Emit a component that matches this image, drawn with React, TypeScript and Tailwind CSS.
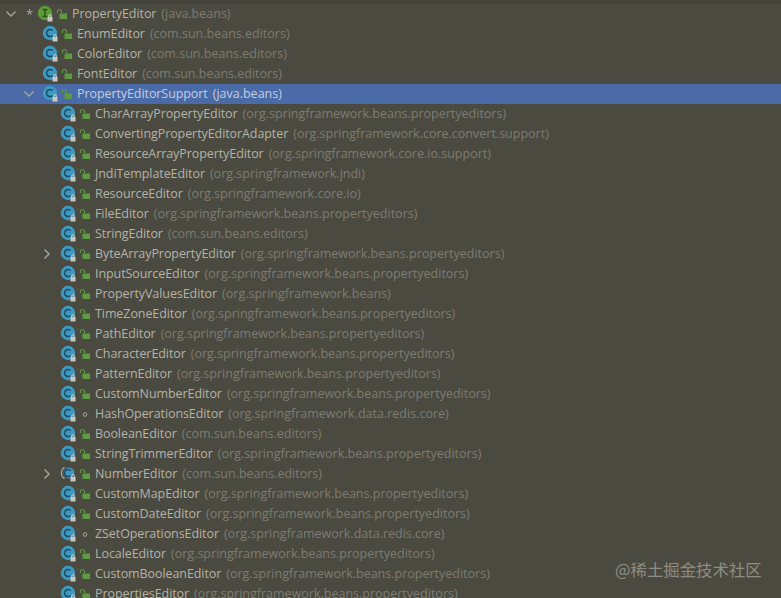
import React from "react";

type RowData = { name: string; pkg: string; depth: 0 | 1 | 2; chevron?: "down" | "right"; selected?: boolean; vis?: "open" | "dot"; kind?: "i" | "c" | "number" };

const rows: RowData[] = [
  { name: "PropertyEditor", pkg: "(java.beans)", depth: 0, chevron: "down", kind: "i" },
  { name: "EnumEditor", pkg: "(com.sun.beans.editors)", depth: 1 },
  { name: "ColorEditor", pkg: "(com.sun.beans.editors)", depth: 1 },
  { name: "FontEditor", pkg: "(com.sun.beans.editors)", depth: 1 },
  { name: "PropertyEditorSupport", pkg: "(java.beans)", depth: 1, chevron: "down", selected: true },
  { name: "CharArrayPropertyEditor", pkg: "(org.springframework.beans.propertyeditors)", depth: 2 },
  { name: "ConvertingPropertyEditorAdapter", pkg: "(org.springframework.core.convert.support)", depth: 2 },
  { name: "ResourceArrayPropertyEditor", pkg: "(org.springframework.core.io.support)", depth: 2 },
  { name: "JndiTemplateEditor", pkg: "(org.springframework.jndi)", depth: 2 },
  { name: "ResourceEditor", pkg: "(org.springframework.core.io)", depth: 2 },
  { name: "FileEditor", pkg: "(org.springframework.beans.propertyeditors)", depth: 2 },
  { name: "StringEditor", pkg: "(com.sun.beans.editors)", depth: 2 },
  { name: "ByteArrayPropertyEditor", pkg: "(org.springframework.beans.propertyeditors)", depth: 2, chevron: "right" },
  { name: "InputSourceEditor", pkg: "(org.springframework.beans.propertyeditors)", depth: 2 },
  { name: "PropertyValuesEditor", pkg: "(org.springframework.beans)", depth: 2 },
  { name: "TimeZoneEditor", pkg: "(org.springframework.beans.propertyeditors)", depth: 2 },
  { name: "PathEditor", pkg: "(org.springframework.beans.propertyeditors)", depth: 2 },
  { name: "CharacterEditor", pkg: "(org.springframework.beans.propertyeditors)", depth: 2 },
  { name: "PatternEditor", pkg: "(org.springframework.beans.propertyeditors)", depth: 2 },
  { name: "CustomNumberEditor", pkg: "(org.springframework.beans.propertyeditors)", depth: 2 },
  { name: "HashOperationsEditor", pkg: "(org.springframework.data.redis.core)", depth: 2, vis: "dot" },
  { name: "BooleanEditor", pkg: "(com.sun.beans.editors)", depth: 2 },
  { name: "StringTrimmerEditor", pkg: "(org.springframework.beans.propertyeditors)", depth: 2 },
  { name: "NumberEditor", pkg: "(com.sun.beans.editors)", depth: 2, chevron: "right", kind: "number" },
  { name: "CustomMapEditor", pkg: "(org.springframework.beans.propertyeditors)", depth: 2 },
  { name: "CustomDateEditor", pkg: "(org.springframework.beans.propertyeditors)", depth: 2 },
  { name: "ZSetOperationsEditor", pkg: "(org.springframework.data.redis.core)", depth: 2, vis: "dot" },
  { name: "LocaleEditor", pkg: "(org.springframework.beans.propertyeditors)", depth: 2 },
  { name: "CustomBooleanEditor", pkg: "(org.springframework.beans.propertyeditors)", depth: 2 },
  { name: "PropertiesEditor", pkg: "(org.springframework.beans.propertyeditors)", depth: 2 },
];

function Chevron({ dir }: { dir: "down" | "right" }) {
  return (
    <svg width="12" height="12" viewBox="0 0 12 12" fill="none" stroke="#a8a89f" strokeWidth="1.4">
      {dir === "down" ? <path d="M1.5 3.5 L6 8 L10.5 3.5" /> : <path d="M3.5 1.5 L8 6 L3.5 10.5" />}
    </svg>
  );
}

function ClassIcon({ kind }: { kind?: "i" | "c" | "number" }) {
  const isI = kind === "i";
  const letter = isI ? "#2f4f1f" : "#1d4e68";
  return (
    <svg width="18" height="18" viewBox="0 0 18 18">
      {kind === "number" ? (
        <>
          <path d="M4.5 2.2 A7 7 0 0 0 4.5 13.8" fill="none" stroke="#a8a89f" strokeWidth="1.2" />
          <circle cx="9" cy="8" r="5.4" fill="#3f9ac2" />
        </>
      ) : (
        <circle cx="8" cy="8" r="7.2" fill={isI ? "#5d9b37" : "#3f9ac2"} />
      )}
      {isI ? (
        <path d="M5.5 4.5 H10.5 M8 4.5 V11.5 M5.5 11.5 H10.5" stroke={letter} strokeWidth="1.5" fill="none" />
      ) : (
        <path d="M10.8 5.6 A3.6 3.6 0 1 0 10.8 10.4" stroke={letter} strokeWidth="1.5" fill="none" />
      )}
      <path d="M11.6 12 V11 A1.4 1.4 0 0 1 14.4 11 V12" fill="none" stroke="#c9c9c4" strokeWidth="1" />
      <rect x="10.5" y="12" width="5" height="4.5" fill="#c9c9c4" />
    </svg>
  );
}

function Visibility({ vis }: { vis?: "open" | "dot" }) {
  if (vis === "dot") {
    return (
      <svg width="12" height="12" viewBox="0 0 12 12" fill="none">
        <circle cx="6" cy="6.5" r="1.8" stroke="#a8a89f" strokeWidth="1" />
      </svg>
    );
  }
  return (
    <svg width="12" height="12" viewBox="0 0 12 12">
      <path d="M1.5 5 V3.5 A2 2 0 0 1 5.5 3.5 V5" fill="none" stroke="#5f9a42" strokeWidth="1.1" />
      <rect x="3.5" y="5.5" width="7.5" height="5.5" fill="#5f9a42" />
    </svg>
  );
}

function Row({ r }: { r: RowData }) {
  const indent = r.depth === 0 ? "pl-[5px]" : r.depth === 1 ? "pl-[23px]" : "pl-[41px]";
  return (
    <div className={`flex h-5 shrink-0 items-center whitespace-nowrap ${indent} ${r.selected ? "bg-[#4a6aa8]" : ""}`}>
      <span className="flex w-3 shrink-0 justify-center">{r.chevron && <Chevron dir={r.chevron} />}</span>
      {r.depth === 0 && <span className="ml-[9px] w-[10px] shrink-0 text-[13px] leading-5 text-[#a8a89f]">*</span>}
      <span className={`${r.depth === 0 ? "ml-px" : "ml-[7px]"} flex w-[18px] shrink-0 justify-center`}>
        <ClassIcon kind={r.kind} />
      </span>
      <span className="ml-px flex w-3 shrink-0 justify-center">
        <Visibility vis={r.vis} />
      </span>
      <span className={`${r.depth === 0 ? "ml-[4px]" : "ml-[4px]"} text-[12.5px] tracking-[-0.08px] ${r.selected ? "text-[#c3cde0]" : "text-[#b4b3a8]"}`}>{r.name}</span>
      <span className={`ml-[5px] text-[12.5px] ${r.selected ? "text-[#c3cde0]" : "text-[#7d7c72]"}`}>{r.pkg}</span>
    </div>
  );
}

export default function App() {
  return (
    <div className="relative flex h-[598px] w-[781px] flex-col overflow-hidden bg-[#4b4a40] font-['Open_Sans','Noto_Sans',sans-serif]">
      <div className="h-[4px] shrink-0 bg-[#45443c]" />
      {rows.map((r) => (
        <Row key={r.name} r={r} />
      ))}
      <div className="absolute left-[615px] top-[559px] font-['Noto_Sans_CJK_SC',sans-serif] text-[16.4px] leading-5 text-[#8e8d84]">@稀土掘金技术社区</div>
    </div>
  );
}
